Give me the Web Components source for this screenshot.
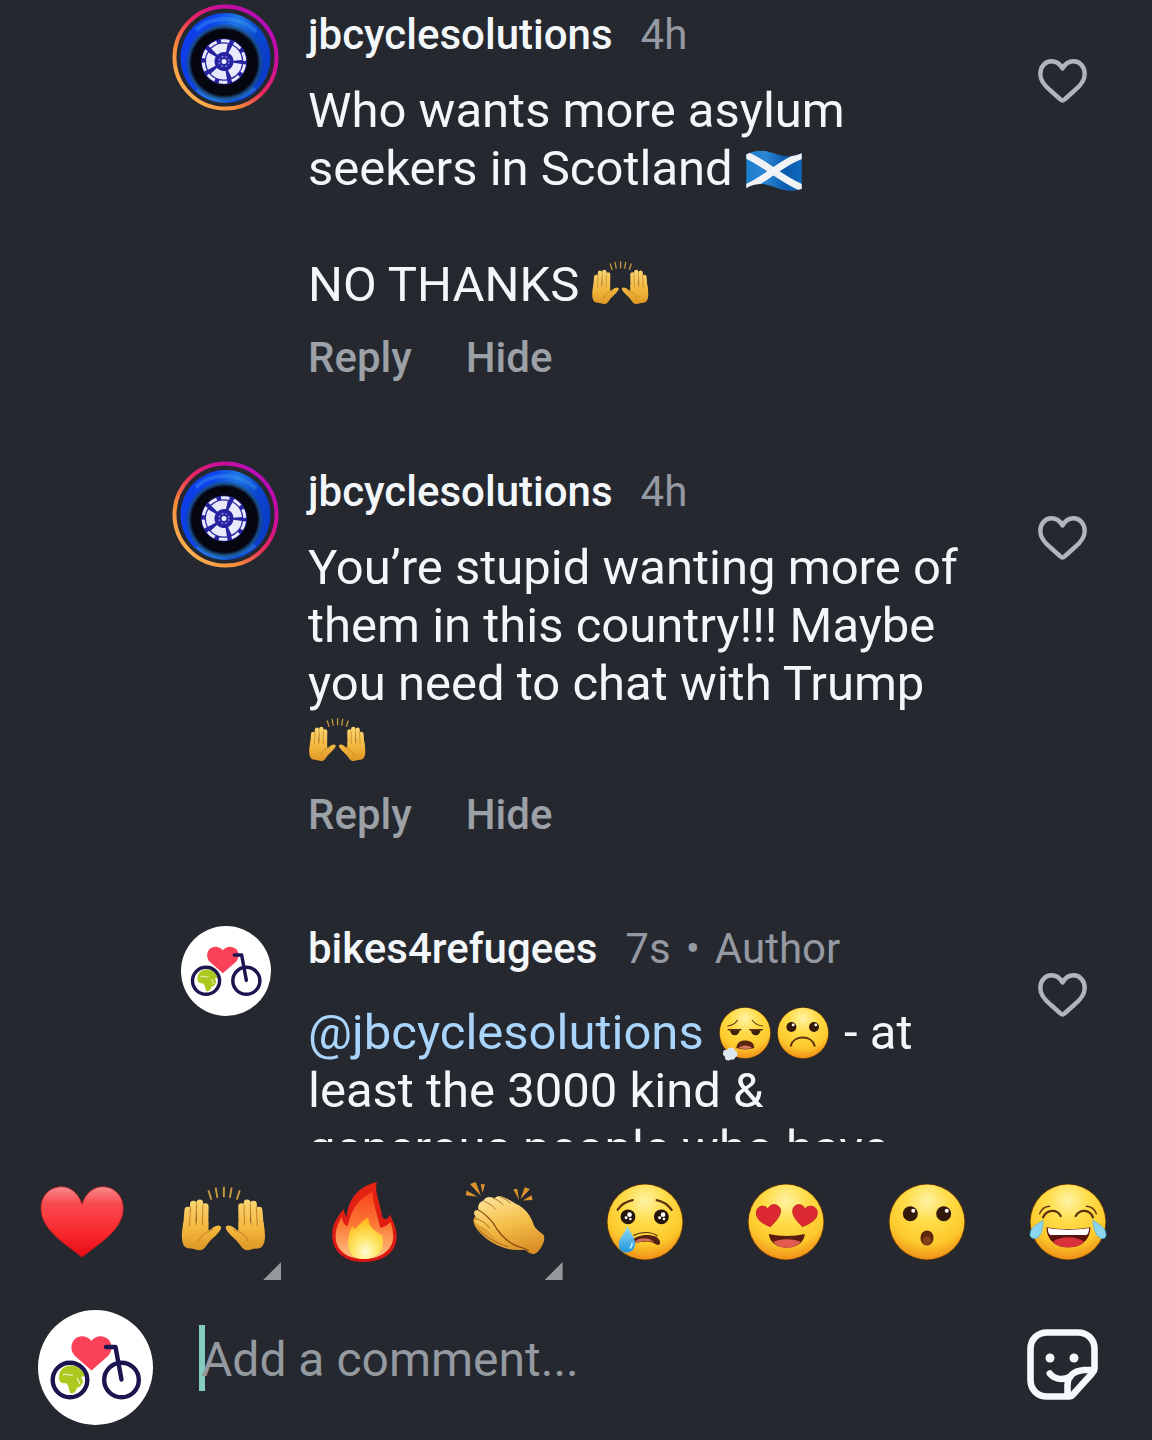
<!DOCTYPE html>
<html lang="en">
<head>
<meta charset="utf-8">
<meta name="viewport" content="width=device-width, initial-scale=1">
<title>Comments</title>
<style>
  body {
    margin: 0;
    background: #25282f;
    color: #f4f7fa;
    font-family: Roboto, "Noto Sans", sans-serif;
  }
</style>
</head>
<body>
<comments-screen>
  <comment-item user="jbcyclesolutions" time="4h" avatar="wheel" actions>Who wants more asylum seekers in Scotland <emoji-icon name="scotland"></emoji-icon><br><br>NO THANKS <emoji-icon name="hands"></emoji-icon></comment-item>
  <comment-item user="jbcyclesolutions" time="4h" avatar="wheel" actions>You’re stupid wanting more of them in this country!!! Maybe you need to chat with Trump <emoji-icon name="hands"></emoji-icon></comment-item>
  <comment-item user="bikes4refugees" time="7s" avatar="bike" badge="Author"><a href="#profile">@jbcyclesolutions</a> <emoji-icon name="exhale"></emoji-icon><emoji-icon name="frown"></emoji-icon> - at least the 3000 kind &amp; generous people who have</comment-item>
  <emoji-bar slot="footer"></emoji-bar>
  <comment-box slot="footer"></comment-box>
</comments-screen>

<script>
// Shared face disc, drawn under every smiley
const FACE = `
  <defs>
    <radialGradient id="skin" cx="50%" cy="22%" r="80%">
      <stop offset="0" stop-color="#fff3a6"/>
      <stop offset=".35" stop-color="#ffdc48"/>
      <stop offset=".72" stop-color="#fdc92c"/>
      <stop offset="1" stop-color="#ee8a16"/>
    </radialGradient>
    <linearGradient id="tear" x1="0" y1="0" x2="0" y2="1">
      <stop offset="0" stop-color="#9bdcf5"/>
      <stop offset="1" stop-color="#1f96de"/>
    </linearGradient>
  </defs>
  <circle cx="50" cy="50" r="44.5" fill="#6b3c08"/>
  <circle cx="50" cy="50" r="43.5" fill="url(#skin)"/>`;

const line = (width, d) =>
  `<path fill="none" stroke="#5b3210" stroke-width="${width}" stroke-linecap="round" d="${d}"/>`;

const HAND = `
  <g stroke="url(#hand)" stroke-width="7.6" stroke-linecap="round">
    <path d="M9 36 7 60M15.5 29 14 60M23 27.5 23 60M29.5 32 29 60"/>
  </g>
  <path fill="url(#hand)" d="M3.3 54C1.8 64 1 74 6 79C10 82 13 80 18 82C24 84 28 82 31 77C36 69 43 66 47.5 58C49 54.5 45 53 41 55C38 56.5 36 59 33 60V50H4z"/>
  <path fill="none" stroke="#b9741d" stroke-width="1" stroke-linecap="round" d="M12.3 33 11 54M19.3 29 18.5 53M26.6 31 26 53M22 72C25 64 31 62 38 59"/>`;

const EMOJI = {
  heart: `
    <defs><linearGradient id="red" x1="0" y1="0" x2="0" y2="1">
      <stop offset="0" stop-color="#fa8a8c"/><stop offset=".25" stop-color="#f9494e"/>
      <stop offset=".65" stop-color="#f8292e"/><stop offset="1" stop-color="#e80a16"/>
    </linearGradient></defs>
    <path fill="url(#red)" stroke="#b91c25" stroke-width=".8" d="M50 29.5C46 16 36 9 26 9C12 9 2.3 20 2.3 34C2.3 60 32 76 50 91C68 76 98 60 98 34C98 20 88 9 74 9C64 9 54 16 50 29.5z"/>`,
  hands: `
    <defs><linearGradient id="hand" gradientUnits="userSpaceOnUse" x1="0" y1="22" x2="0" y2="84">
      <stop offset="0" stop-color="#fbd877"/><stop offset=".6" stop-color="#f2b53c"/><stop offset="1" stop-color="#dc9524"/>
    </linearGradient></defs>
    <path fill="none" stroke="#c79a3e" stroke-width="2.2" d="M33 13 36.5 24M41.5 10 43.5 22M51 9V21M60 10 58 22M69.5 13 66 24"/>
    ${HAND}<g transform="translate(101 0) scale(-1 1)">${HAND}</g>`,
  fire: `
    <defs>
      <linearGradient id="outer" x1="0" y1="0" x2="0" y2="1"><stop offset="0" stop-color="#e52413"/><stop offset="1" stop-color="#d91512"/></linearGradient>
      <linearGradient id="mid" x1="0" y1="0" x2="0" y2="1"><stop offset="0" stop-color="#f8431c"/><stop offset=".5" stop-color="#fb7a36"/><stop offset="1" stop-color="#fec487"/></linearGradient>
      <radialGradient id="core" cx="50%" cy="82%" r="75%"><stop offset="0" stop-color="#fffbd8"/><stop offset=".45" stop-color="#fee766"/><stop offset="1" stop-color="#fdbb1c"/></radialGradient>
    </defs>
    <path fill="url(#outer)" d="M64.7 3.5C62 17 69 27 71 44C75 49 79 46 80 41C84 50 88 57 88 67C88 85 73 96.5 50 96.5C27 96.5 13 84 13 65C13 51 20 44 26 35C27 40 29 42 30 45C31 24 43 9 64.7 3.5z"/>
    <path fill="url(#mid)" d="M60 15C60 29 66 42 69 57C74 56 79 52 81 50C83 57 84 62 84 68C83 83 69 93 50 93C30 93 17 83 17 67C17 57 21 50 24 44C25 51 28 54 31 55C36 35 42 24 60 15z"/>
    <path fill="url(#core)" d="M55 45C55 57 64 61 71 65C76 81 66 93 50 93C35 93 28 81 33 63L36 55L40 58C44 54 48 48 55 45z"/>`,
  clap: `
    <defs><linearGradient id="palm" x1=".3" y1="0" x2=".6" y2="1">
      <stop offset="0" stop-color="#fde294"/><stop offset=".5" stop-color="#f4be49"/><stop offset="1" stop-color="#d98e26"/>
    </linearGradient></defs>
    <path fill="#e0932d" d="M5.4 13.5 4.3 19 18 20.5zM9.3 5.8 16 3.5 22 19.8zM21.7 6H26.7L24 16zM59.7 12 64.3 11.2 66.3 24.4zM73 9.7 79 11.7 68 23.6zM81 19 82 24.4 70.5 25z"/>
    <path fill="#e3a135" d="M15 44C11 49 15 54 17 58C26 70 43 80 58 82C66 83 74 80 78 84L70 60L30 40z"/>
    <path fill="url(#palm)" d="M25 25C29 18 35 22 38 22C44 17 53 23 63 29C73 33 80 43 83 52C84 57 89 60 95 65C97 71 94 77 91 81C88 86 84 88 81 87C77 86 76 83 72 82C62 84 50 79 43 73C34 65 30 58 21 54C14 51 14 47 18 46C12 41 13 36 19 36C18 30 20 27 25 25z"/>
    <path fill="none" stroke="#83480d" stroke-width="1.4" stroke-linecap="round" d="M19 36C27 40 30 44 36 51C43 63 51 73 64 78C69 80 74 80 77 83"/>
    <path fill="none" stroke="#9a5f18" stroke-width="1" stroke-linecap="round" d="M26 26C33 29 36 32 39 35M36 22C41 24 45 27 48 30M45 21C50 23 53 25 56 28M16 46C23 48 28 52 32 57M16 56C27 67 38 74 54 79"/>`,
  cry: `${FACE}
    ${line(2.6, 'M18.2 35.7C22 30 28 26 35.7 24.5M63.6 24.5C71 26 77 30 81 36')}
    <circle cx="30.2" cy="44" r="8.6" fill="#251409"/><circle cx="69" cy="44" r="8.6" fill="#251409"/>
    <g fill="#fff"><circle cx="32" cy="41.5" r="2.7"/><circle cx="28" cy="45" r="1.7"/><circle cx="33" cy="46.5" r="1.5"/><circle cx="71" cy="41.5" r="2.7"/><circle cx="67" cy="45" r="1.7"/><circle cx="72" cy="46.5" r="1.5"/></g>
    <path fill="#54200f" d="M35 72C38 64 65 61 67.5 73C68 78 64 77 61 75C54 71 46 73 37 75z"/>
    <path fill="#d2705c" d="M38 73C44 67 56 68 61 74C54 71 46 72 38 75z"/>
    ${line(1.4, 'M37 65.5C45 61 58 61 64 66')}
    <path fill="url(#tear)" d="M29.5 54C33 63 39 69 38.5 76C38 82 34 85.5 29 85.5C23 85.5 19 82 19.5 75C20 68 27 63 29.5 54z"/>
    <path fill="none" stroke="#c6f1fd" stroke-width="2" stroke-linecap="round" d="M33 80C35 78 35 77 35 75"/>`,
  love: `${FACE}
    <g fill="#dc2931" stroke="#b41c22" stroke-width=".8">
      <path d="M32 55.5C23 52 15 47 15.5 39C16 31 25 29 29 35C31 28 41 28 43.5 35C45 43 37 50 32 55.5z"/>
      <path d="M69 55.5C64 50 56 43 58 35C60 28 70 28 72 35C76 29 86 31 86.5 39C87 47 78 52 69 55.5z"/>
    </g>
    <path fill="#5a1c0e" d="M30 64C43 67 59 67 72 64C71 74 62 80 51 80C40 80 31 74 30 64z"/>
    <path fill="#e25a50" d="M35 73C43 69 59 69 67 73C63 78 57 80 51 80C45 80 39 78 35 73z"/>`,
  wow: `${FACE}
    <circle cx="30.6" cy="40.5" r="8.7" fill="#32190a"/><circle cx="69.4" cy="40.5" r="8.7" fill="#32190a"/>
    <circle cx="34" cy="37" r="2.3" fill="#fff"/><circle cx="73" cy="37" r="2.3" fill="#fff"/>
    <ellipse cx="50" cy="68.5" rx="7.6" ry="8.7" fill="#5d260c"/><ellipse cx="50" cy="71.5" rx="5" ry="5" fill="#84401a"/>`,
  joy: `${FACE}
    ${line(2.6, 'M21 44.5C26 35 37 35 41.5 43M59 43C64 35 75 35 79 44.5')}
    ${line(1.6, 'M17 40.5C19 35 23 32 28.5 31.7M71.5 31.7C77 32 81 35 83 40.5')}
    <path fill="#5a150f" d="M25 56C40 59 60 59 76 56C76 70 66 79.5 50.5 79.5C35 79.5 25 70 25 56z"/>
    <path fill="#fff" d="M26.5 57C41 59.5 60 59.5 74.5 57C74.5 61 73.5 64 71.5 65H29.5C27.5 64 26.5 61 26.5 57z"/>
    <path fill="#d9313b" d="M32 73C42 66 59 66 69 73C65 77.5 58 79.5 50.5 79.5C43 79.5 36 77.5 32 73z"/>
    <path fill="#8bd5f0" stroke="#4cb4de" stroke-width=".8" d="M21 48C21 57 19 67 13 69C8 70 5 67 6 63C7 56 14 53 21 48zM79 48C79 57 83 67 88 69C93 70 95 67 94 63C93 56 86 53 79 48z"/>`,
  exhale: `${FACE}
    ${line(2, 'M20.5 38C27 37 33 34 37 28M62.5 28C67 34 73 37 80 38')}
    <path fill="#3d200c" d="M24 45H41C40 51 37 54 32 54C28 54 25 51 24 45zM60 45H77C76 51 73 54 69 54C64 54 61 51 60 45z"/>
    ${line(2.4, 'M21 44.5H43M58 44.5H80')}
    <path fill="#5a260f" d="M35 76C36 66 43 63 51 63C60 63 66 68 66 76C57 79 44 79 35 76z"/>
    <path fill="#d77560" d="M39 76C43 70 58 70 62 76C55 78 45 78 39 76z"/>
    <g fill="#dce7ee"><circle cx="26" cy="82" r="7"/><circle cx="18" cy="85" r="6"/><circle cx="31" cy="86" r="6"/><circle cx="21" cy="92" r="5.5"/><circle cx="28" cy="91" r="5"/></g>`,
  frown: `${FACE}
    <circle cx="30" cy="39.5" r="8.6" fill="#32190a"/><circle cx="69" cy="39.5" r="8.6" fill="#32190a"/>
    <circle cx="33" cy="36" r="2.4" fill="#fff"/><circle cx="72" cy="36" r="2.4" fill="#fff"/>
    ${line(3.6, 'M29 72C34 53 65 53 70 72')}`,
  scotland: `
    <defs>
      <linearGradient id="blue" x1="0" y1="0" x2="1" y2="0"><stop offset="0" stop-color="#1c7ecb"/><stop offset=".35" stop-color="#2a86d3"/><stop offset=".7" stop-color="#0b5aae"/><stop offset="1" stop-color="#1169bd"/></linearGradient>
      <clipPath id="cloth"><path d="M2 25C18 16 34 17 50 23C68 30 82 30 98 23V84C82 90 68 88 50 81C32 74 18 74 2 83z"/></clipPath>
    </defs>
    <g clip-path="url(#cloth)">
      <rect width="100" height="100" fill="url(#blue)"/>
      <path fill="none" stroke="#f0f2f6" stroke-width="12" d="M-3 24C26 32 68 74 103 84M-3 84C30 74 65 35 103 25"/>
    </g>`
};

const AVATARS = {
  wheel: `<svg viewBox="0 0 107 107" aria-hidden="true">
    <defs>
      <linearGradient id="ring" x1=".1" y1=".9" x2=".85" y2=".15"><stop offset="0" stop-color="#fdb552"/><stop offset=".28" stop-color="#f78d3c"/><stop offset=".55" stop-color="#ea2a5a"/><stop offset=".8" stop-color="#cc0f97"/><stop offset="1" stop-color="#b80cb4"/></linearGradient>
      <linearGradient id="tyre" x1="0" y1=".2" x2="1" y2=".5"><stop offset="0" stop-color="#0b3ae6"/><stop offset=".3" stop-color="#0d44ee"/><stop offset=".55" stop-color="#1f77e4"/><stop offset=".8" stop-color="#0a45d0"/><stop offset="1" stop-color="#0a3cc8"/></linearGradient>
      <radialGradient id="shade"><stop offset=".84" stop-color="#05060f"/><stop offset=".93" stop-color="#1d5384" stop-opacity=".8"/><stop offset="1" stop-color="#123a70" stop-opacity="0"/></radialGradient>
    </defs>
    <circle cx="53.5" cy="53.5" r="51" fill="none" stroke="url(#ring)" stroke-width="4"/>
    <circle cx="53.5" cy="54" r="45" fill="url(#tyre)"/>
    <path fill="none" stroke="#3f9af0" stroke-width="4" opacity=".4" d="M24 26C40 11 68 11 84 28M25 86C40 98 68 98 83 84"/>
    <circle cx="52.5" cy="58.5" r="39" fill="url(#shade)"/>
    <circle cx="52" cy="57.5" r="23" fill="#2623a0"/>
    <g fill="none" stroke="#e8e9fa" transform="rotate(8 52 57.5)">
      <circle cx="52" cy="57.5" r="13.8" stroke-width="8.5" stroke-dasharray="13.6 3.74"/>
      <circle cx="52" cy="57.5" r="20.8" stroke-width="3" stroke-dasharray="8.6 4.47"/>
      <circle cx="52" cy="57.5" r="5" stroke="#7d86dc" stroke-width="1.4" stroke-dasharray="2 1.93"/>
    </g>
    <circle cx="52" cy="57.5" r="2.5" fill="#eef0ff"/>
  </svg>`,
  bike: `<svg viewBox="0 0 115 115" aria-hidden="true">
    <circle cx="57.5" cy="57.5" r="57.5" fill="#fff"/>
    <path fill="#fb4158" d="M53.3 31C49 25 40 25 36 30C32 35 33 42 37 46L53.5 60.5L70 46C74 42 75 35 71 30C66 25 58 25 53.3 31z"/>
    <path fill="#abc91f" d="M24 59C28 55 36 54 41 58C44 60 46 63 47 66L43 67L45 71C44 76 41 77 39 78C37 83 35 84 32 83C31 79 31 76 28 73C24 74 21 72 21 68C21 64 22 61 24 59z"/>
    <path fill="none" stroke="#fff" stroke-width="1" d="M25 65C28 63 31 66 35 65M39 68 42 74"/>
    <g fill="none" stroke="#1c1650" stroke-width="4.4">
      <circle cx="32" cy="70" r="17.3"/>
      <circle cx="83.5" cy="70" r="17.3"/>
      <path stroke-linejoin="round" stroke-linecap="round" d="M68 37H77.5L83.5 69.5"/>
    </g>
  </svg>`
};

class EmojiIcon extends HTMLElement {
  constructor() {
    super();
    this.attachShadow({ mode: 'open' });
  }

  connectedCallback() {
    this.shadowRoot.innerHTML = `
      <style>
        :host {
          display: inline-block;
          width: var(--emoji-size, 58px);
          height: var(--emoji-size, 58px);
          margin: var(--emoji-margin, -6px 0);
          vertical-align: -7px;
        }
        svg { display: block; width: 100%; height: 100%; }
      </style>
      <svg viewBox="0 0 100 100" aria-hidden="true">${EMOJI[this.getAttribute('name')]}</svg>
    `;
  }
}

class UserAvatar extends HTMLElement {
  constructor() {
    super();
    this.attachShadow({ mode: 'open' });
  }

  connectedCallback() {
    this.shadowRoot.innerHTML = `
      <style>
        :host { display: block; width: var(--avatar-size, 107px); height: var(--avatar-size, 107px); }
        svg { display: block; width: 100%; height: 100%; }
      </style>
      ${AVATARS[this.getAttribute('name')]}
    `;
  }
}

class LikeButton extends HTMLElement {
  constructor() {
    super();
    this.attachShadow({ mode: 'open' });
    this.shadowRoot.innerHTML = `
      <style>
        :host { display: block; }
        button { display: block; padding: 0; border: 0; background: none; color: #b0b4bb; cursor: pointer; }
        svg { display: block; width: 49px; height: 44px; }
      </style>
      <button type="button" aria-label="Like">
        <svg viewBox="0 0 49 44" fill="none" stroke="currentColor" stroke-width="4.4" stroke-linejoin="round" aria-hidden="true">
          <path d="M24.5 9.5C22 5 18 2.3 13.5 2.3C7 2.3 2.3 8 2.3 15C2.3 23 8 28 13 32L22.5 40.5C24 42 25 42 26.5 40.5L36 32C41 28 46.7 23 46.7 15C46.7 8 42 2.3 35.5 2.3C31 2.3 27 5 24.5 9.5z"/>
        </svg>
      </button>
    `;
  }
}

class CommentItem extends HTMLElement {
  constructor() {
    super();
    this.attachShadow({ mode: 'open' });
  }

  connectedCallback() {
    const user = this.getAttribute('user');
    const time = this.getAttribute('time');
    const avatar = this.getAttribute('avatar');
    const badge = this.getAttribute('badge');

    this.shadowRoot.innerHTML = `
      <style>
        :host { display: block; }
        article {
          display: grid;
          grid-template-columns: 107px minmax(0, 1fr) auto;
          padding: 4px 65px 74px 172px;
        }
        .bike { --avatar-size: 90px; justify-self: center; margin-top: 8px; }
        .body { padding: 6px 70px 0 29px; }
        header {
          display: flex;
          align-items: baseline;
          gap: 28px;
          font-size: 42px;
          line-height: 50px;
        }
        .user { color: inherit; font-weight: 500; text-decoration: none; }
        .meta { display: flex; gap: 15px; color: #9599a1; }
        p { margin: 22px 0 0; font-size: 49px; line-height: 58px; }
        .badged p { margin-top: 30px; }
        ::slotted(a) { color: #a9d4fb; text-decoration: none; }
        like-button { margin-top: 55px; }
        footer { display: flex; gap: 54px; margin-top: 19px; }
        footer button {
          padding: 0;
          border: 0;
          background: none;
          color: #9ca0a7;
          font: 500 42px/50px Roboto, "Noto Sans", sans-serif;
          cursor: pointer;
        }
      </style>
      <article>
        <user-avatar class="${avatar}" name="${avatar}"></user-avatar>
        <div class="body ${badge ? 'badged' : ''}">
          <header>
            <a class="user" href="#profile">${user}</a>
            <span class="meta"><span>${time}</span>${badge ? `<span>•</span><span>${badge}</span>` : ''}</span>
          </header>
          <p><slot></slot></p>
          ${this.hasAttribute('actions') ? `
          <footer>
            <button type="button">Reply</button>
            <button type="button">Hide</button>
          </footer>` : ''}
        </div>
        <like-button></like-button>
      </article>
    `;
  }
}

class EmojiBar extends HTMLElement {
  constructor() {
    super();
    this.attachShadow({ mode: 'open' });
  }

  connectedCallback() {
    const items = ['heart', 'hands', 'fire', 'clap', 'cry', 'love', 'wow', 'joy'];
    const variants = ['hands', 'clap'];

    this.shadowRoot.innerHTML = `
      <style>
        :host {
          display: grid;
          grid-template-columns: repeat(8, 1fr);
          justify-items: center;
          padding: 22px 14px 0 12px;
          --emoji-size: 86px;
          --emoji-margin: 0;
        }
        button {
          position: relative;
          display: grid;
          place-items: center;
          width: 116px;
          height: 116px;
          padding: 0;
          border: 0;
          background: none;
          cursor: pointer;
        }
        .more::after {
          content: "";
          position: absolute;
          right: 0;
          bottom: 0;
          width: 18px;
          height: 18px;
          background: #94979b;
          clip-path: polygon(100% 0, 100% 100%, 0 100%);
        }
      </style>
      ${items.map(name => `
        <button type="button" aria-label="${name}" class="${variants.includes(name) ? 'more' : ''}">
          <emoji-icon name="${name}"></emoji-icon>
        </button>`).join('')}
    `;
  }
}

class CommentBox extends HTMLElement {
  constructor() {
    super();
    this.attachShadow({ mode: 'open' });
    this.shadowRoot.innerHTML = `
      <style>
        :host { display: block; }
        form { display: flex; align-items: center; padding: 30px 54px 15px 38px; }
        user-avatar { --avatar-size: 115px; }
        .field { position: relative; flex: 1; margin: 0 32px 20px 46px; }
        .field::before {
          content: "";
          position: absolute;
          left: 0;
          top: 0;
          width: 6px;
          height: 66px;
          background: #84cdc3;
        }
        input {
          position: relative;
          box-sizing: border-box;
          display: block;
          width: 100%;
          height: 66px;
          padding: 4px 0 0 2px;
          border: 0;
          outline: 0;
          background: none;
          color: inherit;
          font: 48px/58px Roboto, "Noto Sans", sans-serif;
          caret-color: #84cdc3;
        }
        input::placeholder { color: #9599a0; opacity: 1; }
        button { padding: 0 0 6px; border: 0; background: none; color: #f6f9fc; cursor: pointer; }
        svg { display: block; width: 71px; height: 71px; }
      </style>
      <form>
        <user-avatar name="bike"></user-avatar>
        <div class="field"><input type="text" aria-label="Add a comment" placeholder="Add a comment..."></div>
        <button type="button" aria-label="Stickers">
          <svg viewBox="0 0 71 71" fill="none" stroke="currentColor" stroke-width="6.6" stroke-linecap="round" stroke-linejoin="round" aria-hidden="true">
            <path d="M42 67.5H20C10.5 67.5 3.5 60.5 3.5 51V20C3.5 10.5 10.5 3.5 20 3.5H51C60.5 3.5 67.5 10.5 67.5 20V40C67.5 42 66 43.5 65 44.5L46 65.5C45 66.8 44 67.5 42 67.5z"/>
            <path d="M66 41H57C46 42 40.5 48 40.5 56V66"/>
            <path d="M22.8 44.5C27 49.5 34 52 43 48"/>
            <circle cx="23" cy="29" r="4.5" fill="currentColor" stroke="none"/>
            <circle cx="47" cy="29" r="4.5" fill="currentColor" stroke="none"/>
          </svg>
        </button>
      </form>
    `;
  }
}

class CommentsScreen extends HTMLElement {
  constructor() {
    super();
    this.attachShadow({ mode: 'open' });
    this.shadowRoot.innerHTML = `
      <style>
        :host { display: flex; flex-direction: column; height: 100vh; }
        main { flex: 1; min-height: 0; overflow: hidden; }
      </style>
      <main><slot></slot></main>
      <div><slot name="footer"></slot></div>
    `;
  }
}

customElements.define('emoji-icon', EmojiIcon);
customElements.define('user-avatar', UserAvatar);
customElements.define('like-button', LikeButton);
customElements.define('comment-item', CommentItem);
customElements.define('emoji-bar', EmojiBar);
customElements.define('comment-box', CommentBox);
customElements.define('comments-screen', CommentsScreen);
</script>
</body>
</html>
